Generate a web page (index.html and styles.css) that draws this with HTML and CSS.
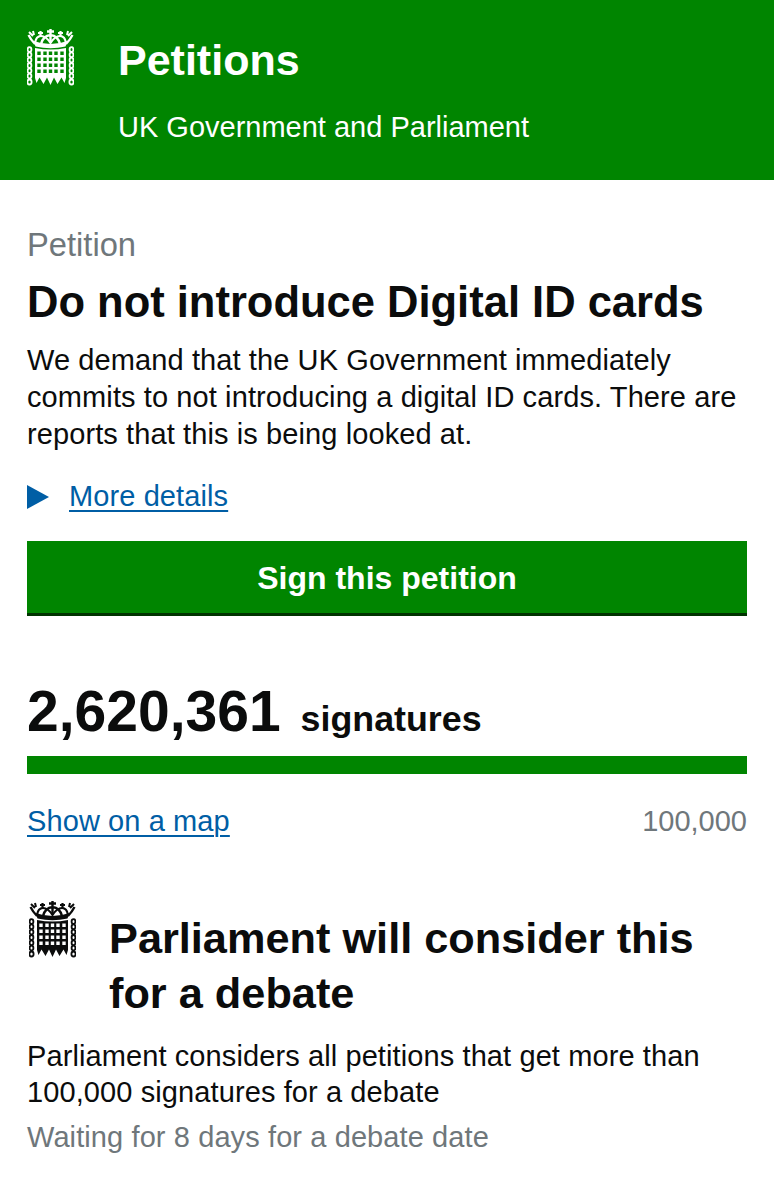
FILE: index.html
```html
<!DOCTYPE html>
<html lang="en">
<head>
<meta charset="utf-8">
<title>Petitions</title>
<link rel="stylesheet" href="styles.css">
</head>
<body>
<svg class="defs" width="0" height="0" aria-hidden="true">
  <symbol id="portcullis" viewBox="0 0 47 58">
    <path fill="currentColor" d="M6.500 13 Q23.500 19 40.500 13 L38.500 18.500 Q23.500 22 8.500 18.500 Z"/>
    <g fill="none" stroke="currentColor">
      <path stroke-width="2.300" d="M1.500 7 Q4 12 8 16 M45.500 7 Q43 12 39 16"/>
      <path stroke-width="2.200" d="M8 15 Q9 8 14 8 Q19 8 23.500 15 Q28 8 33 8 Q38 8 39 15"/>
      <path stroke-width="2.400" d="M23.500 1 V15 M20 3.500 H27 M14 16 Q16 8 23.500 7 Q31 8 33 16"/>
      <path stroke-width="2.200" d="M13.500 3 V9 M11 5 H16 M33.500 3 V9 M31 5 H36"/>
      <path stroke-width="2" d="M2 4 L6 8 M45 4 L41 8 M6 3 L7 7 M41 3 L40 7"/>
      <g stroke-width="1.800">
        <ellipse cx="2.500" cy="21.500" rx="1.900" ry="2.400"/>
        <ellipse cx="2.500" cy="26.800" rx="1.900" ry="2.400"/>
        <ellipse cx="2.500" cy="32.100" rx="1.900" ry="2.400"/>
        <ellipse cx="2.500" cy="37.400" rx="1.900" ry="2.400"/>
        <ellipse cx="2.500" cy="42.700" rx="1.900" ry="2.400"/>
        <ellipse cx="2.500" cy="48" rx="1.900" ry="2.400"/>
        <ellipse cx="2.500" cy="54" rx="2.100" ry="2.500"/>
        <ellipse cx="44.500" cy="21.500" rx="1.900" ry="2.400"/>
        <ellipse cx="44.500" cy="26.800" rx="1.900" ry="2.400"/>
        <ellipse cx="44.500" cy="32.100" rx="1.900" ry="2.400"/>
        <ellipse cx="44.500" cy="37.400" rx="1.900" ry="2.400"/>
        <ellipse cx="44.500" cy="42.700" rx="1.900" ry="2.400"/>
        <ellipse cx="44.500" cy="48" rx="1.900" ry="2.400"/>
        <ellipse cx="44.500" cy="54" rx="2.100" ry="2.500"/>
      </g>
    </g>
    <path fill="currentColor" fill-rule="evenodd" d="M8 20 Q23.500 23 39 20 V50 L37.500 55 L34.500 49.500 L30.500 56 L27 49.500 L23.500 57 L20 49.500 L16.500 56 L12.500 49.500 L9.500 55 L8 50 Z
      M10.300 23.500 h3.400 v3.400 h-3.400 z M16.300 23.500 h3.400 v3.400 h-3.400 z M21.800 23.500 h3.400 v3.400 h-3.400 z M27.300 23.500 h3.400 v3.400 h-3.400 z M33.300 23.500 h3.400 v3.400 h-3.400 z
      M10.300 29.500 h3.400 v3.400 h-3.400 z M16.300 29.500 h3.400 v3.400 h-3.400 z M21.800 29.500 h3.400 v3.400 h-3.400 z M27.300 29.500 h3.400 v3.400 h-3.400 z M33.300 29.500 h3.400 v3.400 h-3.400 z
      M10.300 35.500 h3.400 v3.400 h-3.400 z M16.300 35.500 h3.400 v3.400 h-3.400 z M21.800 35.500 h3.400 v3.400 h-3.400 z M27.300 35.500 h3.400 v3.400 h-3.400 z M33.300 35.500 h3.400 v3.400 h-3.400 z
      M10.300 41.500 h3.400 v3.400 h-3.400 z M16.300 41.500 h3.400 v3.400 h-3.400 z M21.800 41.500 h3.400 v3.400 h-3.400 z M27.300 41.500 h3.400 v3.400 h-3.400 z M33.300 41.500 h3.400 v3.400 h-3.400 z"/>
  </symbol>
</svg>

<header class="site-header">
  <svg class="crest crest-header"><use href="#portcullis"/></svg>
  <div class="brand">
    <div class="brand-title">Petitions</div>
    <div class="brand-sub">UK Government and Parliament</div>
  </div>
</header>

<main class="content">
  <p class="eyebrow">Petition</p>
  <h1 class="title">Do not introduce Digital ID cards</h1>
  <p class="lede">We demand that the UK Government immediately commits to not introducing a digital ID cards. There are reports that this is being looked at.</p>

  <div class="details">
    <span class="arrow"></span>
    <a class="link" href="#">More details</a>
  </div>

  <a class="button" href="#">Sign this petition</a>

  <div class="count">
    <span class="count-num">2,620,361</span>
    <span class="count-label">signatures</span>
  </div>
  <div class="bar"></div>
  <div class="bar-foot">
    <a class="link" href="#">Show on a map</a>
    <span class="muted">100,000</span>
  </div>

  <section class="debate">
    <svg class="crest crest-debate"><use href="#portcullis"/></svg>
    <h2 class="debate-title">Parliament will consider this for a debate</h2>
  </section>
  <p class="debate-text">Parliament considers all petitions that get more than 100,000 signatures for a debate</p>
  <p class="debate-wait muted">Waiting for 8 days for a debate date</p>
</main>
</body>
</html>
```
FILE: styles.css
```css
* { box-sizing: border-box; }
html, body { margin: 0; padding: 0; }
body {
  font-family: "Liberation Sans", Arial, sans-serif;
  color: #0b0c0c;
  background: #fff;
  overflow: hidden;
}
.defs { position: absolute; }
.site-header {
  height: 180px;
  background: #008500;
  color: #fff;
  display: flex;
  padding: 28px 27px 0;
}
.crest { display: block; flex: none; width: 47px; height: 58px; }
.crest-debate { color: #0b0c0c; margin-left: 2px; }
.brand { margin-left: 44px; }
.brand-title { font-size: 43px; font-weight: 700; line-height: 48px; margin-top: 8px; }
.brand-sub { font-size: 29px; line-height: 34px; margin-top: 26px; }
.content { padding: 0 27px; }
.eyebrow { margin: 47px 0 0; font-size: 32.700px; line-height: 36px; color: #6f777b; }
.title { margin: 15px 0 0; font-size: 43.500px; line-height: 48px; font-weight: 700; }
.lede { margin: 16px 0 0; font-size: 29px; line-height: 37px; letter-spacing: 0.1px; }
.details { display: flex; align-items: center; margin-top: 25px; height: 37px; }
.arrow {
  width: 0; height: 0;
  border-left: 22px solid #005ea5;
  border-top: 12px solid transparent;
  border-bottom: 12px solid transparent;
  margin-right: 20px;
}
.link { font-size: 29px; color: #005ea5; letter-spacing: 0.1px; text-decoration: underline; text-underline-offset: 4px; text-decoration-thickness: 2px; }
.button {
  display: block;
  margin-top: 26px;
  height: 75px;
  background: #008500;
  border-bottom: 3px solid #003300;
  color: #fff;
  font-size: 32px;
  font-weight: 700;
  line-height: 74px;
  text-align: center;
  text-decoration: none;
}
.count { display: flex; align-items: baseline; margin-top: 62px; height: 65px; line-height: 66px; }
.count-num { font-size: 57px; font-weight: 700; }
.count-label { font-size: 35.800px; font-weight: 700; margin-left: 20px; }
.bar { height: 18px; background: #008500; margin-top: 13px; }
.bar-foot { display: flex; justify-content: space-between; align-items: center; margin-top: 27px; height: 40px; font-size: 29px; }
.muted { color: #6f777b; }
.debate { display: flex; margin-top: 59px; }
.debate-title { margin: 11px 0 0 33px; font-size: 43.300px; line-height: 55px; font-weight: 700; }
.debate-text { margin: 17px 0 0; font-size: 29px; line-height: 36px; letter-spacing: 0.1px; }
.debate-wait { margin: 9px 0 0; font-size: 29px; line-height: 36px; letter-spacing: 0.1px; }
```
